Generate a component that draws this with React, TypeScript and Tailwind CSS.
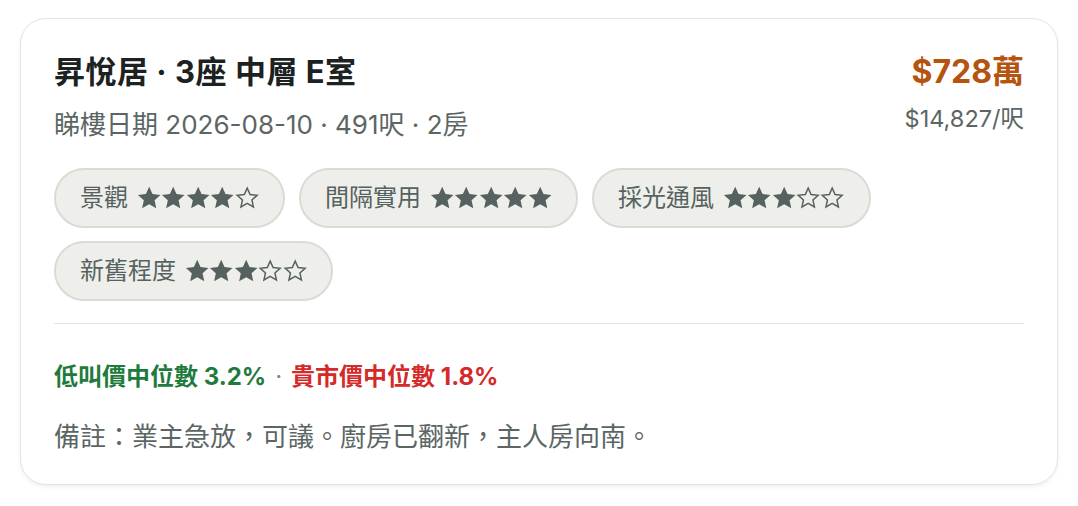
import React from "react";

const font = { fontFamily: "Inter, 'Noto Sans CJK TC', sans-serif" };

const ratings = [
  { label: "景觀", score: 4 },
  { label: "間隔實用", score: 5 },
  { label: "採光通風", score: 3 },
  { label: "新舊程度", score: 3 },
];

const STAR = "M12 2.2l2.9 6.4 7 .7-5.2 4.7 1.5 6.9L12 17.4l-6.2 3.5 1.5-6.9L2.1 9.3l7-.7z";

function Stars({ score }: { score: number }) {
  return (
    <span className="flex items-center">
      {[0, 1, 2, 3, 4].map((i) =>
        i < score ? (
          <svg key={i} viewBox="1.5 1.5 21 21" className="h-[24px] w-[24.4px]">
            <path d={STAR} fill="#56625f" />
          </svg>
        ) : (
          <svg key={i} viewBox="1.5 1.5 21 21" className="h-[24px] w-[24.4px]">
            <path
              d={STAR}
              fill="none"
              stroke="#56625f"
              strokeWidth="1.5"
              transform="translate(12 12) scale(0.88) translate(-12 -12)"
            />
          </svg>
        )
      )}
    </span>
  );
}

export default function App() {
  return (
    <div className="w-full bg-white px-5 pt-[18px] pb-5" style={font}>
      <div className="rounded-[26px] border border-[#e4e4e4] bg-white p-[33px] pb-[31px] shadow-[0_2px_4px_rgba(0,0,0,0.06)]">
        {/* Header */}
        <div className="flex items-start justify-between">
          <div>
            <h1 className="text-[31px] leading-[40px] font-bold tracking-[0.5px] text-[#1c2221]">
              昇悅居 · 3座 中層 E室
            </h1>
            <p className="mt-4 text-[26px] leading-[34px] text-[#5b6663]">
              睇樓日期 2026-08-10 · 491呎 · 2房
            </p>
          </div>
          <div className="text-right">
            <div className="text-[32px] leading-[40px] font-bold text-[#b4540f]">
              $728萬
            </div>
            <div className="mt-[12px] text-[23.5px] leading-[30px] text-[#5b6663]">
              $14,827/呎
            </div>
          </div>
        </div>

        {/* Ratings */}
        <div className="mt-[26px] flex flex-wrap gap-x-[14px] gap-y-[13px]">
          {ratings.map((r) => (
            <span
              key={r.label}
              className="flex h-[60px] items-center gap-[9px] rounded-full border-2 border-[#d9dbd5] bg-[#eeefea] px-[24px] text-[24px] text-[#56625f]"
            >
              {r.label}
              <Stars score={r.score} />
            </span>
          ))}
        </div>

        <hr className="mt-[22px] border-t border-[#e3e3e3]" />

        {/* Stats */}
        <p className="mt-[37px] flex items-center text-[24px] leading-[32px] font-bold">
          <span className="text-[#1e7b3c]">低叫價中位數 3.2%</span>
          <span className="mx-[9px] font-normal text-[#7d8583]">·</span>
          <span className="text-[#d42a2a]">貴市價中位數 1.8%</span>
        </p>

        <p className="mt-[28px] text-[26px] leading-[32px] text-[#5b6663]">
          備註：業主急放，可議。廚房已翻新，主人房向南。
        </p>
      </div>
    </div>
  );
}
